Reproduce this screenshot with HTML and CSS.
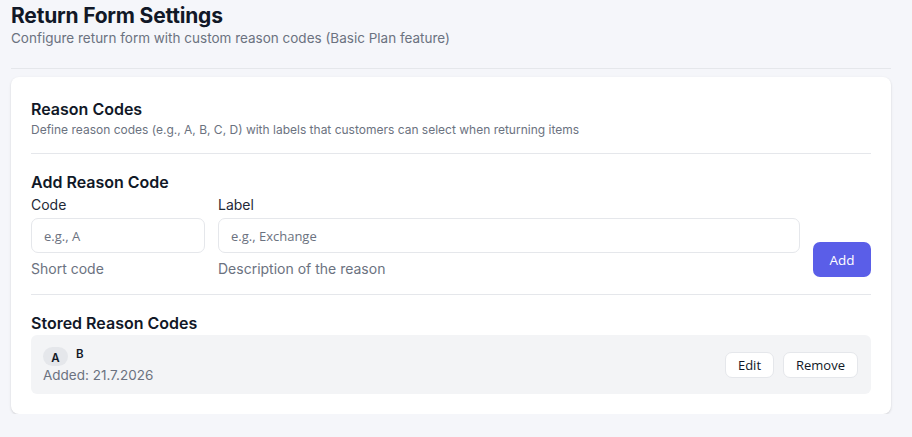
FILE: index.html
```html
<!DOCTYPE html>
<html lang="en">
    <head>
        <meta charset="utf-8">
        <title>Return Form Settings</title>
        <meta name="viewport" content="width=device-width, initial-scale=1">
        <link rel="stylesheet" href="styles.css">
    </head>
    <body>
        <div class="page">
            <header class="page__header">
                <h1>Return Form Settings</h1>
                <p>Configure return form with custom reason codes (Basic Plan feature)</p>
            </header>

            <section class="card">
                <div class="card__section card__section--intro">
                    <h2>Reason Codes</h2>
                    <p class="card__desc">Define reason codes (e.g., A, B, C, D) with labels that customers can select when returning items</p>
                </div>

                <div class="card__section">
                    <h2>Add Reason Code</h2>
                    <div class="form">
                        <div class="field field--code">
                            <label>Code</label>
                            <input type="text" placeholder="e.g., A">
                            <span class="field__help">Short code</span>
                        </div>
                        <div class="field field--label">
                            <label>Label</label>
                            <input type="text" placeholder="e.g., Exchange">
                            <span class="field__help">Description of the reason</span>
                        </div>
                        <button class="btn btn--primary">Add</button>
                    </div>
                </div>

                <div class="card__section card__section--last">
                    <h2>Stored Reason Codes</h2>
                    <div class="code-item">
                        <div class="code-item__info">
                            <div class="code-item__top">
                                <span class="badge">A</span>
                                <span class="code-item__label">B</span>
                            </div>
                            <span class="code-item__date">Added: 21.7.2026</span>
                        </div>
                        <div class="code-item__actions">
                            <button class="btn">Edit</button>
                            <button class="btn">Remove</button>
                        </div>
                    </div>
                </div>
            </section>
        </div>
    </body>
</html>
```

FILE: styles.css
```css
* {
    box-sizing: border-box;
}

body {
    margin: 0;
    padding: 0;
    background-color: #f5f6fa;
    font-family: Inter, "Noto Sans", sans-serif;
    color: #111827;
}

.page {
    width: 880px;
    margin-left: 11px;
    padding-top: 3px;
}

.page__header {
    padding-bottom: 21px;
    border-bottom: 1px solid #e5e7eb;
    margin-bottom: 8px;
}

.page__header h1 {
    margin: 0;
    font-size: 21px;
    font-weight: 700;
    line-height: 26px;
    letter-spacing: -0.2px;
}

.page__header p {
    margin: 0;
    font-size: 13.5px;
    line-height: 18px;
    color: #6b7280;
}

.card {
    background-color: #fff;
    border-radius: 8px;
    box-shadow: 0 1px 3px rgba(0,0,0,0.1), 0 1px 2px rgba(0,0,0,0.06);
    padding: 0 20px 20px;
}

.card__section {
    padding: 17px 0 16px;
    border-bottom: 1px solid #e5e7eb;
}

.card__section--intro {
    padding-top: 21px;
}

.card__section--last {
    border-bottom: none;
    padding: 17px 0 0;
}

.card h2 {
    margin: 0;
    font-size: 16px;
    font-weight: 600;
    line-height: 22px;
}

.card__desc {
    margin: 2px 0 0;
    font-size: 12px;
    line-height: 15px;
    color: #6b7280;
}

.form {
    display: flex;
    align-items: flex-end;
    gap: 13px;
    margin-top: 3px;
}

.field {
    display: flex;
    flex-direction: column;
}

.field--code {
    width: 174px;
}

.field--label {
    flex: 1;
}

.field label {
    font-size: 14px;
    line-height: 18px;
    color: #1f2937;
    margin-bottom: 4px;
}

.field input {
    height: 35px;
    border: 1px solid #e5e7eb;
    border-radius: 7px;
    padding: 0 12px;
    font-family: "Open Sans", sans-serif;
    font-size: 13px;
    color: #111827;
    background: #fff;
}

.field input::placeholder {
    color: #6b7280;
}

.field__help {
    margin-top: 7px;
    font-size: 14px;
    line-height: 18px;
    color: #6b7280;
}

.btn {
    font-family: "Open Sans", sans-serif;
    font-size: 13px;
    height: 26px;
    padding: 0 12px;
    border: 1px solid #e5e7eb;
    border-radius: 7px;
    background: #fff;
    color: #111827;
}

.btn--primary {
    height: 35px;
    width: 58px;
    padding: 0;
    margin-bottom: 1px;
    border: none;
    background-color: #5a5ee8;
    color: #fff;
    font-size: 13.5px;
}

.code-item {
    display: flex;
    align-items: center;
    justify-content: space-between;
    margin-top: 1px;
    padding: 12px 13px 11px 12px;
    background-color: #f3f4f6;
    border-radius: 6px;
}

.code-item__info {
    display: flex;
    flex-direction: column;
}

.code-item__top {
    display: flex;
    align-items: flex-start;
    gap: 8px;
}

.badge {
    display: inline-flex;
    align-items: center;
    justify-content: center;
    width: 25px;
    height: 19px;
    border-radius: 10px;
    background-color: #e5e7eb;
    font-size: 11.5px;
    font-weight: 600;
    padding-top: 2px;
}

.code-item__label {
    font-size: 11.5px;
    font-weight: 600;
    line-height: 15px;
}

.code-item__date {
    margin-top: 1px;
    font-size: 13.5px;
    line-height: 16px;
    color: #6b7280;
}

.code-item__actions {
    display: flex;
    gap: 9px;
}
```
